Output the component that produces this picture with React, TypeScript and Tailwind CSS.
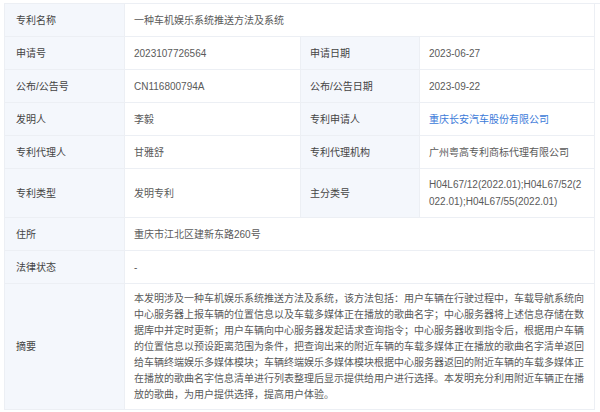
const abstractLines = [
  '本发明涉及一种车机娱乐系统推送方法及系统，该方法包括：用户车辆在行驶过程中，车载导航系统向',
  '中心服务器上报车辆的位置信息以及车载多媒体正在播放的歌曲名字；中心服务器将上述信息存储在数',
  '据库中并定时更新；用户车辆向中心服务器发起请求查询指令；中心服务器收到指令后，根据用户车辆',
  '的位置信息以预设距离范围为条件，把查询出来的附近车辆的车载多媒体正在播放的歌曲名字清单返回',
  '给车辆终端娱乐多媒体模块；车辆终端娱乐多媒体模块根据中心服务器返回的附近车辆的车载多媒体正',
  '在播放的歌曲名字信息清单进行列表整理后显示提供给用户进行选择。本发明充分利用附近车辆正在播',
  '放的歌曲，为用户提供选择，提高用户体验。',
];

const Label = ({ children, first, className = '' }: { children: React.ReactNode; first?: boolean; className?: string }) => (
  <div
    className={`flex items-center bg-[#f4f7fc] border-r border-b border-[#eceff4] text-[#444] ${first ? 'pl-[11px]' : 'pl-[9px]'} ${className}`}
  >
    {children}
  </div>
);

const Value = ({ children, className = '' }: { children: React.ReactNode; className?: string }) => (
  <div className={`flex items-center bg-white border-r border-b border-[#eceff4] text-[#5a5a5a] pl-[9px] pr-[9px] ${className}`}>
    {children}
  </div>
);

const App = () => {
  return (
    <div
      className="w-[600px] h-[412px] bg-white pt-[3px] pl-[4px] text-[10px]"
      style={{ fontFamily: '"Liberation Sans", "Noto Sans CJK SC", sans-serif' }}
    >
      <div className="grid grid-cols-[120px_176px_119px_175px] grid-rows-[33px_33px_33px_33px_33px_49px_33px_33px_126px] border-t border-l border-[#eceff4]">
        <Label first>专利名称</Label>
        <Value className="col-span-3">一种车机娱乐系统推送方法及系统</Value>

        <Label first>申请号</Label>
        <Value>2023107726564</Value>
        <Label>申请日期</Label>
        <Value>2023-06-27</Value>

        <Label first>公布/公告号</Label>
        <Value>CN116800794A</Value>
        <Label>公布/公告日期</Label>
        <Value>2023-09-22</Value>

        <Label first>发明人</Label>
        <Value>李毅</Value>
        <Label>专利申请人</Label>
        <Value>
          <span className="text-[#3b7ad9]">重庆长安汽车股份有限公司</span>
        </Value>

        <Label first>专利代理人</Label>
        <Value>甘雅舒</Value>
        <Label>专利代理机构</Label>
        <Value>广州粤高专利商标代理有限公司</Value>

        <Label first>专利类型</Label>
        <Value>发明专利</Value>
        <Label>主分类号</Label>
        <Value>
          <div className="leading-[17px]">
            <div>H04L67/12(2022.01);H04L67/52(2</div>
            <div>022.01);H04L67/55(2022.01)</div>
          </div>
        </Value>

        <Label first>住所</Label>
        <Value className="col-span-3">重庆市江北区建新东路260号</Value>

        <Label first>法律状态</Label>
        <Value className="col-span-3">-</Value>

        <Label first>摘要</Label>
        <Value className="col-span-3">
          <div className="leading-[16px] whitespace-nowrap">
            {abstractLines.map((line, i) => (
              <div key={i}>{line}</div>
            ))}
          </div>
        </Value>
      </div>
    </div>
  );
};

export default App;
